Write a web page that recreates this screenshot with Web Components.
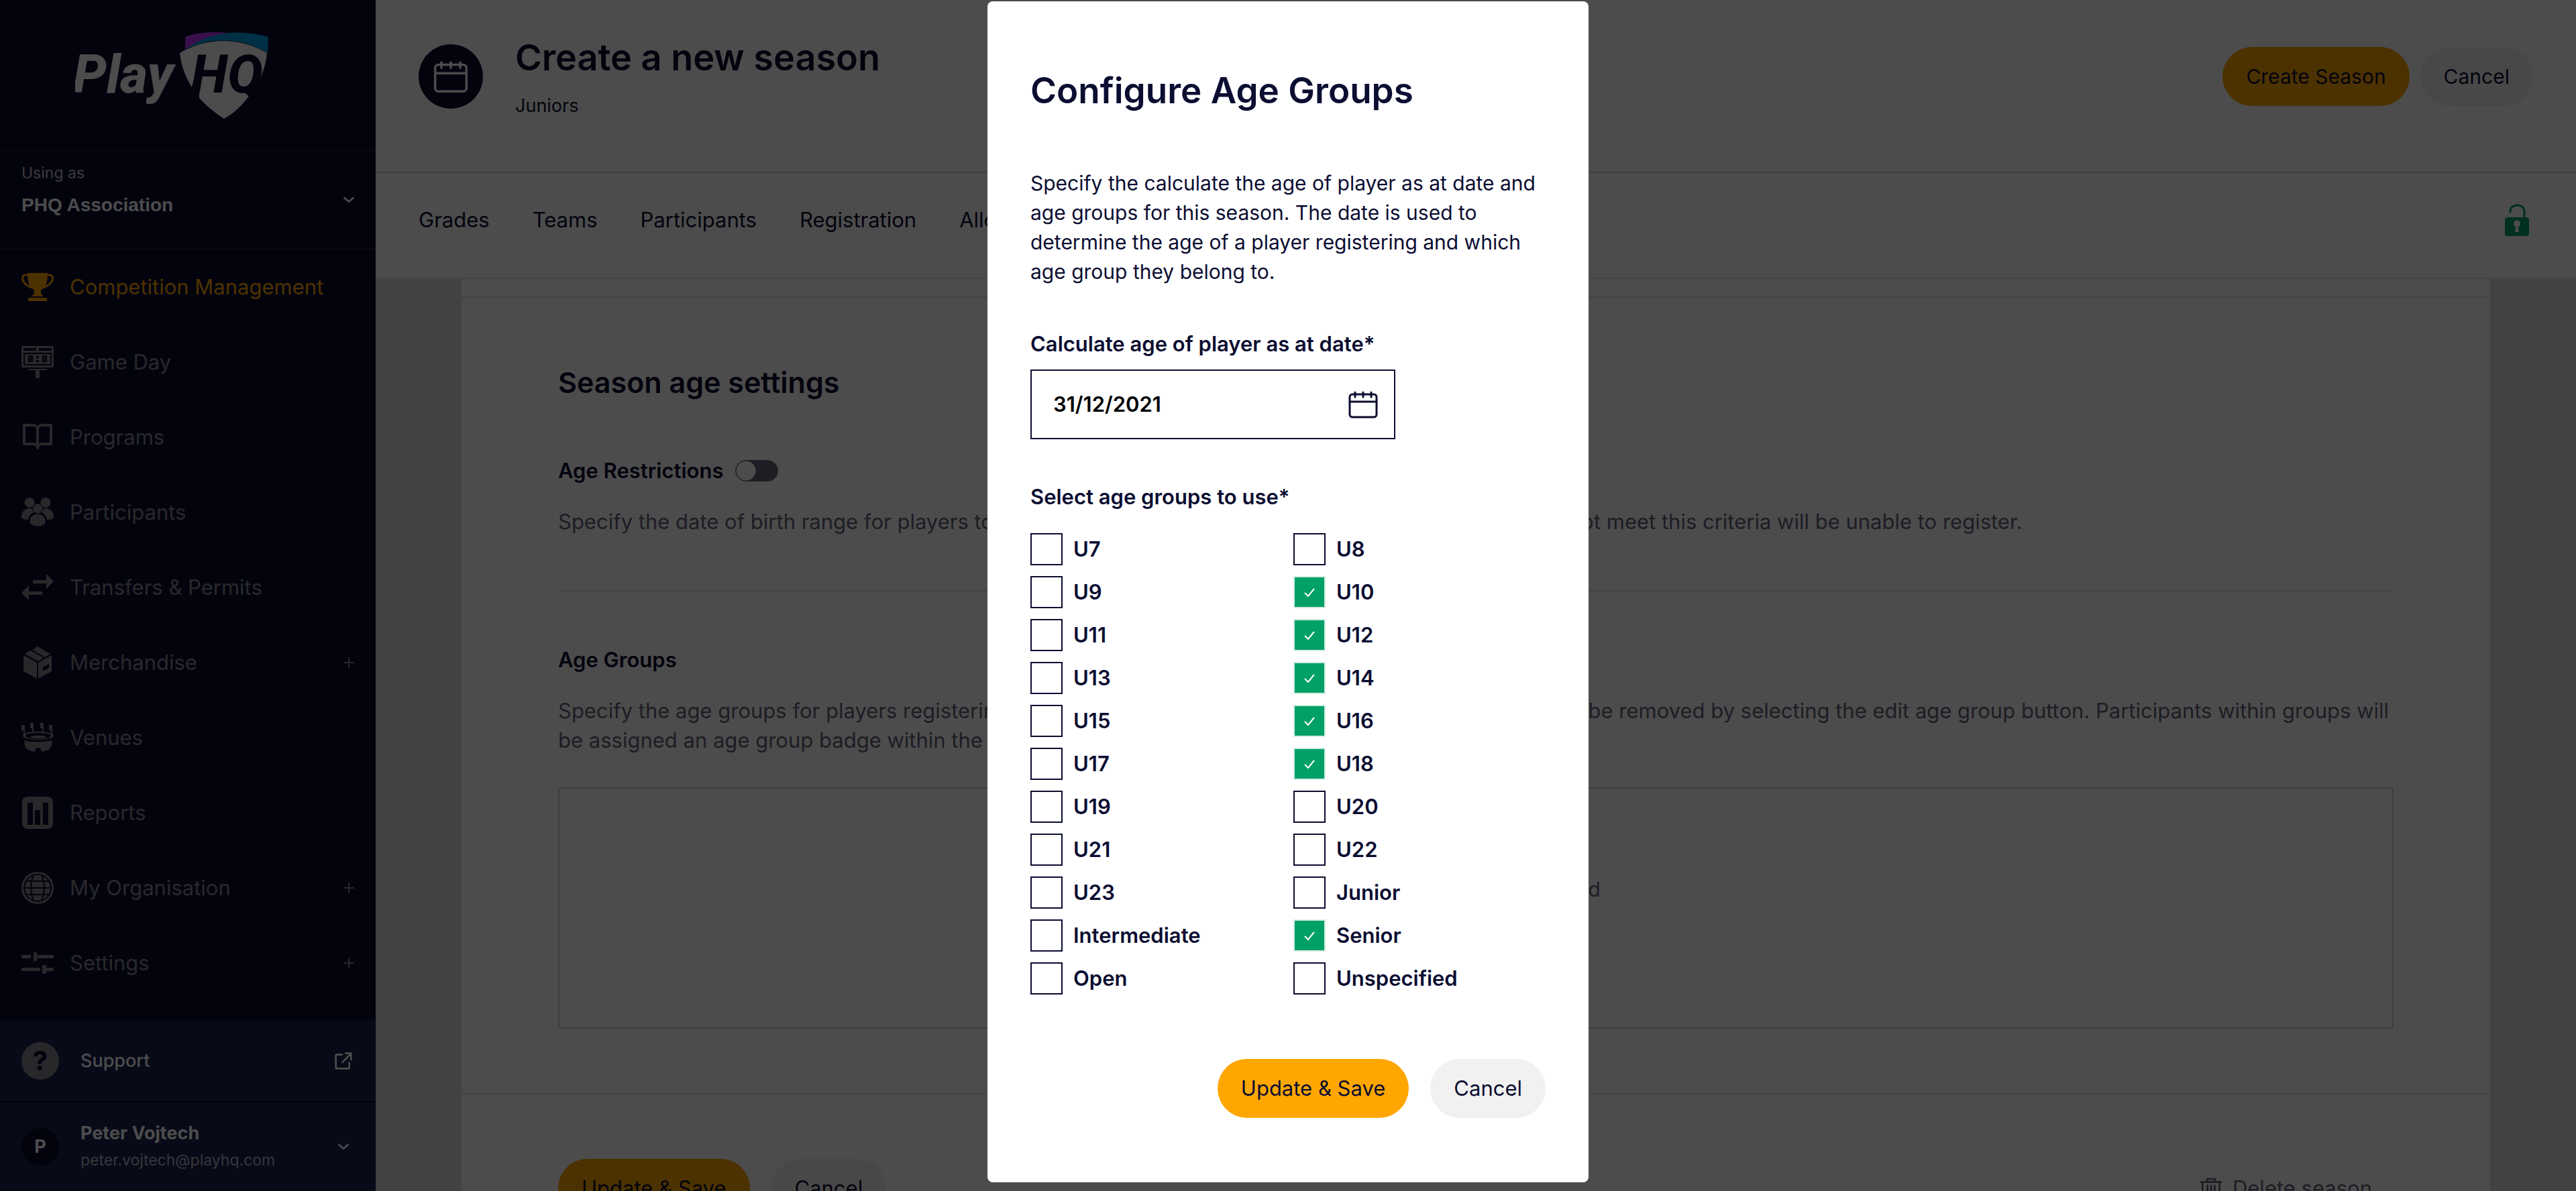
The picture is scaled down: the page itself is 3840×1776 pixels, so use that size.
<!DOCTYPE html>
<html lang="en">
<head>
<meta charset="utf-8">
<title>PlayHQ - Create a new season</title>
<style>
  :root {
    --navy: #0b0d31;
    --navy-light: #1b2350;
    --orange: #ffa700;
    --green: #00a066;
    --grey-text: #64627a;
    --line: #e2e2e2;
  }

  html, body {
    margin: 0;
    height: 100%;
    overflow: hidden;
  }

  body {
    font-family: Inter, "Liberation Sans", sans-serif;
    font-size: 31px;
    line-height: 44px;
    color: var(--navy);
    background: #fff;
  }
</style>
</head>
<body>
<season-app></season-app>

<script>
const icons = {
  trophy: `
    <path d="M9 3h30v3c0 12-4 19-10 23 0 5 1 7 4 9H15c3-2 4-4 4-9C13 25 9 18 9 6z" fill="currentColor"/>
    <path d="M10 6H6C3 6 1.500 8 1.500 11c0 6 7 11 14 14M38 6h4c3 0 4.500 2 4.500 5 0 6-7 11-14 14" fill="none" stroke="currentColor" stroke-width="3"/>
    <path d="M10 40h28v5H10z" fill="currentColor"/>`,
  scoreboard: `
    <rect width="48" height="32" rx="2" fill="currentColor"/>
    <path d="M3 3h19v4H3zM26 3h19v4H26z" fill="var(--navy)"/>
    <rect x="4" y="11" width="40" height="17" fill="none" stroke="var(--navy)" stroke-width="2"/>
    <path d="M11 15h5v8h-5zM32 15h5v8h-5zM11 23l5-8M32 23l5-8" fill="none" stroke="var(--navy)" stroke-width="2"/>
    <path d="M22 15h4v3h-4zM22 21h4v3h-4z" fill="var(--navy)"/>
    <path d="M9 34h30l-2 2H11zM21 36h6v12h-6z" fill="currentColor"/>`,
  book: `
    <path d="M4 6h13c4 0 7 3 7 7 0-4 3-7 7-7h13v28H31c-4 0-6 1-7 5-1-4-3-5-7-5H4zM24 13v27" fill="none" stroke="currentColor" stroke-width="4" stroke-linejoin="round" stroke-linecap="round"/>`,
  people: `
    <g fill="currentColor">
      <circle cx="12" cy="9.500" r="7.500"/><circle cx="36" cy="9.500" r="7.500"/>
      <path d="M0 31c0-8 5-13 12-13 2 0 4 .5 6 1.500V24c-5 3-7 6-8 11-5 0-10-1-10-4zM48 31c0-8-5-13-12-13-2 0-4 .5-6 1.500V24c5 3 7 6 8 11 5 0 10-1 10-4z"/>
      <circle cx="24" cy="18.500" r="7.500" stroke="var(--navy)"/>
      <path d="M12 38c0-8 5-12 12-12s12 4 12 12c0 4-5 7-12 7s-12-3-12-7z" stroke="var(--navy)"/>
    </g>`,
  transfer: `<path d="M17 13h20V4l11 11-11 11v-8H17zM31 35H11v8L0 32l11-11v9h20z" fill="currentColor"/>`,
  box: `
    <g fill="currentColor">
      <path d="M3 13l20 11v24L3 37zM45 13L25 24v24l20-11zM5 11l8-5 20 11-8 5zM16 5l8-5 19 11-8 5z"/>
      <path d="M32 31l9-5v6l-9 5z" fill="var(--navy)"/>
    </g>`,
  stadium: `
    <g fill="currentColor">
      <path d="M0 5h5v8H0zM3 13h2v9H3zM13 2h5v8h-5zM16 10h2v5h-2zM28 2h5v8h-5zM31 10h2v5h-2zM41 5h5v8h-5zM44 13h2v9h-2z"/>
      <path fill-rule="evenodd" d="M25 15c12 0 23 2 23 6s-11 6-23 6-23-2-23-6 11-6 23-6zm0 2c-11 0-19 1-19 4s8 5 19 5 19-2 19-5-8-4-19-4z"/>
      <ellipse cx="25" cy="23" rx="12" ry="2"/>
      <path d="M4 28c10 3 30 3 42 0l-1 7c-1 6-7 9-15 10 0-8-10-8-10 0-8-1-14-4-15-10z"/>
    </g>`,
  chart: `
    <rect x="1" width="46" height="48" rx="8" fill="currentColor"/>
    <path d="M9 9h8v33H9zM20 20h8v22h-8zM32 9h8v33h-8z" fill="var(--navy)"/>`,
  globe: `
    <circle cx="24" cy="24" r="22.500" fill="none" stroke="currentColor" stroke-width="3"/>
    <circle cx="24" cy="24" r="19" fill="currentColor"/>
    <path d="M4 24h40M7 14h34M7 34h34M18 5c-5 12-5 26 0 38M30 5c5 12 5 26 0 38" fill="none" stroke="var(--navy)" stroke-width="2"/>`,
  sliders: `<path d="M0 12h14v5H0zM18 8h5v4h25v5H23v4h-5zM0 31h28v5H0zM31 27h6v4h11v5H37v4h-6z" fill="currentColor"/>`,
  calendar: `
    <g fill="none" stroke="currentColor" stroke-width="3" stroke-linecap="round">
      <rect x="4" y="9" width="40" height="34" rx="4"/>
      <path d="M4 20h40M12 6v7M24 6v7M36 6v7"/>
    </g>`,
  chevron: `<path d="M4 15l20 17 20-17" fill="none" stroke="currentColor" stroke-width="8" stroke-linecap="round" stroke-linejoin="round"/>`,
  plus: `<path d="M24 3v42M3 24h42" stroke="currentColor" stroke-width="6" stroke-linecap="round"/>`,
  external: `
    <g fill="none" stroke="currentColor" stroke-width="4" stroke-linecap="round" stroke-linejoin="round">
      <path d="M21 10H9c-1 0-2 1-2 2v27c0 1 1 2 2 2h26c1 0 2-1 2-2V28"/>
      <path d="M29 7h12v14M40 8L22 27"/>
    </g>`,
  unlock: `
    <path d="M14 12v-1c0-12 21-12 21 0v10" fill="none" stroke="currentColor" stroke-width="3" stroke-linecap="round"/>
    <rect x="6" y="20" width="36" height="28" rx="4" fill="currentColor"/>
    <path d="M21 42l1-8a5 5 0 1 1 4 0l1 8z" fill="#fff"/>`,
  trash: `
    <g fill="none" stroke="currentColor" stroke-width="4">
      <path d="M0 10h48M15 9V3h18v6M5 12v33h38V12M16 16v25M24 16v25M32 16v25"/>
    </g>`
};

class AppIcon extends HTMLElement {
  constructor() {
    super();
    this.shadowDOM = this.attachShadow({ mode: 'open' });
  }

  connectedCallback() {
    this.shadowDOM.innerHTML = `
      <style>
      :host {
        display: block;
        flex: none;
        width: 48px;
        height: 48px;
      }

      svg {
        display: block;
        width: 100%;
        height: 100%;
      }
      </style>
      <svg viewBox="0 0 48 48" aria-hidden="true">${icons[this.getAttribute('name')]}</svg>
    `;
  }
}

class PillButton extends HTMLElement {
  constructor() {
    super();
    this.attachShadow({ mode: 'open' }).innerHTML = `
      <style>
      :host {
        display: block;
        flex: none;
      }

      button {
        display: flex;
        align-items: center;
        gap: 16px;
        height: 88px;
        padding: 0 35px;
        border: 0;
        border-radius: 44px;
        background: #f1f1f1;
        color: var(--navy);
        font: inherit;
        cursor: pointer;
      }

      :host([primary]) button {
        background: var(--orange);
      }

      :host([plain]) button {
        padding: 0 32px;
        background: none;
        color: var(--grey-text);
      }
      </style>
      <button type="button"><slot></slot></button>
    `;
  }
}

class PlayLogo extends HTMLElement {
  constructor() {
    super();
    this.attachShadow({ mode: 'open' }).innerHTML = `
      <style>
      :host {
        display: block;
      }

      svg {
        display: block;
        width: 288px;
        height: 130px;
      }

      text {
        font-style: italic;
        font-weight: 800;
      }
      </style>
      <svg viewBox="112 48 288 130" role="img" aria-label="PlayHQ">
        <path d="M276 55c20-7 42-8 64-6-22 4-40 9-64 25z" fill="#c136ff"/>
        <path d="M278 73c34-26 79-30 122-18l-1 24c-38-24-85-24-121-6z" fill="#00a0e6"/>
        <path d="M268 79c40-24 90-24 130 0-2 18-7 34-16 50l-4-4-6 17c-10 14-22 26-38 35-14-9-26-19-37-31v-30l-11 14c-10-15-16-33-18-51z" fill="#fff"/>
        <path d="M289 118l8 0 0 29-12-14z" fill="var(--navy)"/>
        <path d="M368 132l12-9 4 7-10 12z" fill="var(--navy)"/>
        <text x="109" y="138" font-family="Roboto" font-size="79" fill="#fff">Play</text>
        <text x="285" y="138" font-family="Liberation Sans Narrow, Roboto" font-size="79" fill="var(--navy)">HQ</text>
      </svg>
    `;
  }
}

class NavItem extends HTMLElement {
  constructor() {
    super();
    this.shadowDOM = this.attachShadow({ mode: 'open' });
  }

  connectedCallback() {
    const more = this.hasAttribute('expandable') ? '<app-icon class="more" name="plus"></app-icon>' : '';
    this.shadowDOM.innerHTML = `
      <style>
      :host {
        display: block;
      }

      a {
        display: flex;
        align-items: center;
        gap: 24px;
        height: 112px;
        padding: 0 32px;
        color: #88868f;
        text-decoration: none;
      }

      :host([active]) a {
        color: var(--orange);
      }

      .label {
        flex: 1;
      }

      .more {
        width: 16px;
        height: 16px;
      }
      </style>
      <a href="#">
        <app-icon name="${this.getAttribute('icon')}"></app-icon>
        <span class="label"><slot></slot></span>
        ${more}
      </a>
    `;
  }
}

class AppSidebar extends HTMLElement {
  constructor() {
    super();
    this.attachShadow({ mode: 'open' }).innerHTML = `
      <style>
      :host {
        display: flex;
        flex-direction: column;
        flex: none;
        width: 560px;
        background: var(--navy);
        color: #fff;
      }

      .logo {
        box-sizing: border-box;
        height: 226px;
        padding: 48px 112px 0;
        border-bottom: 2px solid #1a1c3d;
      }

      .account {
        display: flex;
        align-items: center;
        justify-content: space-between;
        width: 100%;
        padding: 16px 32px 48px;
        border: 0;
        border-bottom: 2px solid #1a1c3d;
        background: none;
        color: #fff;
        font: inherit;
        text-align: left;
      }

      .account .using {
        display: block;
        margin-bottom: 16px;
        color: #c0c0c0;
        font-size: 23px;
        line-height: 32px;
      }

      .account .name {
        display: block;
        font: bold 28px/32px "Liberation Sans", Arial, sans-serif;
      }

      .account .small {
        margin-top: 32px;
      }

      .small {
        width: 16px;
        height: 16px;
      }

      .footer {
        margin-top: auto;
        background: var(--navy-light);
        font-size: 27px;
        line-height: 40px;
      }

      .row {
        box-sizing: border-box;
        display: flex;
        align-items: center;
        gap: 32px;
        width: 100%;
        height: 132px;
        padding: 0 32px;
        border: 0;
        background: none;
        color: #fff;
        font: inherit;
        text-align: left;
        text-decoration: none;
      }

      .support {
        height: 122px;
        border-bottom: 2px solid var(--navy);
        font-weight: 500;
      }

      .row .text {
        flex: 1;
      }

      .avatar {
        flex: none;
        width: 56px;
        border-radius: 50%;
        background: var(--navy);
        font-size: 27px;
        font-weight: 700;
        line-height: 56px;
        text-align: center;
      }

      .support .avatar {
        background: #88868f;
        color: var(--navy);
        font-size: 40px;
      }

      .user {
        display: block;
        font-weight: 700;
      }

      .email {
        display: block;
        color: #b8b8c4;
        font-size: 23px;
      }

      .end {
        display: flex;
        justify-content: center;
        width: 32px;
      }

      .external {
        width: 32px;
        height: 32px;
      }
      </style>
      <div class="logo"><play-logo></play-logo></div>
      <button class="account" type="button">
        <span>
          <span class="using">Using as</span>
          <span class="name">PHQ Association</span>
        </span>
        <app-icon class="small" name="chevron"></app-icon>
      </button>
      <nav>
        <nav-item icon="trophy" active>Competition Management</nav-item>
        <nav-item icon="scoreboard">Game Day</nav-item>
        <nav-item icon="book">Programs</nav-item>
        <nav-item icon="people">Participants</nav-item>
        <nav-item icon="transfer">Transfers &amp; Permits</nav-item>
        <nav-item icon="box" expandable>Merchandise</nav-item>
        <nav-item icon="stadium">Venues</nav-item>
        <nav-item icon="chart">Reports</nav-item>
        <nav-item icon="globe" expandable>My Organisation</nav-item>
        <nav-item icon="sliders" expandable>Settings</nav-item>
      </nav>
      <div class="footer">
        <a class="row support" href="#">
          <span class="avatar">?</span>
          <span class="text">Support</span>
          <app-icon class="external" name="external"></app-icon>
        </a>
        <button class="row" type="button">
          <span class="avatar">P</span>
          <span class="text">
            <span class="user">Peter Vojtech</span>
            <span class="email">peter.vojtech@playhq.com</span>
          </span>
          <span class="end"><app-icon class="small" name="chevron"></app-icon></span>
        </button>
      </div>
    `;
  }
}

class PageHeader extends HTMLElement {
  constructor() {
    super();
    this.attachShadow({ mode: 'open' }).innerHTML = `
      <style>
      :host {
        display: block;
      }

      header {
        display: flex;
        align-items: center;
        padding: 50px 64px 78px;
        border-bottom: 2px solid #d6d6d6;
      }

      .badge {
        display: flex;
        align-items: center;
        justify-content: center;
        width: 96px;
        height: 96px;
        border-radius: 50%;
        background: var(--navy);
        color: #fff;
      }

      .badge app-icon {
        width: 56px;
        height: 56px;
      }

      .titles {
        flex: 1;
        margin-left: 48px;
      }

      h1 {
        margin: 0 0 16px;
        font-size: 54px;
        font-weight: 600;
        line-height: 72px;
      }

      p {
        margin: 0;
        font-size: 27px;
        line-height: 40px;
      }

      .actions {
        display: flex;
        gap: 16px;
        font-size: 30px;
      }

      .tabs {
        display: flex;
        align-items: center;
        gap: 64px;
        padding: 48px 64px 64px;
        border-bottom: 2px solid var(--line);
      }

      .tabs a {
        color: inherit;
        text-decoration: none;
      }

      .tabs app-icon {
        margin: -2px 0 -2px auto;
        color: var(--green);
      }
      </style>
      <header>
        <div class="badge"><app-icon name="calendar"></app-icon></div>
        <div class="titles">
          <h1>Create a new season</h1>
          <p>Juniors</p>
        </div>
        <div class="actions">
          <pill-button primary>Create Season</pill-button>
          <pill-button>Cancel</pill-button>
        </div>
      </header>
      <nav class="tabs">
        <a href="#">Grades</a>
        <a href="#">Teams</a>
        <a href="#">Participants</a>
        <a href="#">Registration</a>
        <a href="#">Allocation</a>
        <app-icon name="unlock"></app-icon>
      </nav>
    `;
  }
}

class SeasonSettings extends HTMLElement {
  constructor() {
    super();
    this.attachShadow({ mode: 'open' }).innerHTML = `
      <style>
      :host {
        display: block;
        padding: 0 128px;
        background: #dedede;
      }

      .card {
        padding-top: 26px;
        background: #fff;
      }

      section {
        padding: 96px 144px;
        border-top: 2px solid var(--line);
      }

      h2, h3, p {
        margin: 0;
      }

      h2 {
        margin-bottom: 80px;
        font-size: 43px;
        font-weight: 600;
        line-height: 60px;
      }

      h3, label {
        font-size: 31px;
        font-weight: 600;
        line-height: 44px;
      }

      p {
        margin-top: 32px;
        color: var(--grey-text);
      }

      hr {
        height: 2px;
        margin: 80px 0;
        border: 0;
        background: var(--line);
      }

      .switch {
        display: flex;
        align-items: center;
        gap: 18px;
      }

      .switch input {
        appearance: none;
        width: 64px;
        height: 32px;
        margin: 0;
        border: 1px solid var(--grey-text);
        border-radius: 16px;
        background: radial-gradient(circle at 15px 15px, #fff 14px, var(--grey-text) 15px);
      }

      .empty {
        box-sizing: border-box;
        display: flex;
        flex-direction: column;
        align-items: center;
        gap: 48px;
        height: 360px;
        margin-top: 48px;
        padding-top: 128px;
        border: 2px solid #cfcfcf;
      }

      .empty span {
        color: var(--grey-text);
        font-size: 30px;
      }

      .actions {
        display: flex;
        gap: 32px;
      }

      .actions [plain] {
        margin-left: auto;
      }

      .trash {
        width: 32px;
        height: 32px;
      }
      </style>
      <div class="card">
        <section>
          <h2>Season age settings</h2>
          <div class="switch">
            <label for="restrictions">Age Restrictions</label>
            <input id="restrictions" type="checkbox" role="switch">
          </div>
          <p>Specify the date of birth range for players to be eligible to register for this season. Participants who do not meet this criteria will be unable to register.</p>
          <hr>
          <h3>Age Groups</h3>
          <p>Specify the age groups for players registering for this season. Age groups are able to be added and may be removed by selecting the edit age group button. Participants within groups will be assigned an age group badge within the admin portal.</p>
          <div class="empty">
            <span>No age groups configured</span>
            <pill-button primary>Add Age Groups</pill-button>
          </div>
        </section>
        <section>
          <div class="actions">
            <pill-button primary>Update &amp; Save</pill-button>
            <pill-button>Cancel</pill-button>
            <pill-button plain><app-icon class="trash" name="trash"></app-icon>Delete season</pill-button>
          </div>
        </section>
      </div>
    `;
  }
}

class AgeCheckbox extends HTMLElement {
  constructor() {
    super();
    this.shadowDOM = this.attachShadow({ mode: 'open' });
  }

  set data({ name, checked }) {
    this._data = { name, checked };
    this.render();
  }

  render() {
    this.shadowDOM.innerHTML = `
      <style>
      :host {
        display: block;
      }

      label {
        display: flex;
        align-items: center;
        gap: 16px;
        height: 48px;
        font-weight: 600;
      }

      .box {
        display: grid;
        width: 48px;
        height: 48px;
      }

      input, svg {
        grid-area: 1 / 1;
        box-sizing: border-box;
        width: 48px;
        height: 48px;
        margin: 0;
      }

      input {
        appearance: none;
        border: 2px solid var(--navy);
        background: #fff;
      }

      input:checked {
        border-color: #d3ede3;
        background: var(--green) padding-box;
      }

      svg {
        display: none;
        pointer-events: none;
      }

      input:checked + svg {
        display: block;
      }
      </style>
      <label>
        <span class="box">
          <input type="checkbox" ${this._data.checked ? 'checked' : ''}>
          <svg viewBox="0 0 48 48"><path d="M17 25l5 5 9-11" fill="none" stroke="#fff" stroke-width="2"/></svg>
        </span>
        <span>${this._data.name}</span>
      </label>
    `;
  }
}

const ageGroups = [
  'U7', 'U8', 'U9', 'U10', 'U11', 'U12', 'U13', 'U14', 'U15', 'U16', 'U17',
  'U18', 'U19', 'U20', 'U21', 'U22', 'U23', 'Junior', 'Intermediate', 'Senior',
  'Open', 'Unspecified'
];
const selected = ['U10', 'U12', 'U14', 'U16', 'U18', 'Senior'];

class AgeGroupsModal extends HTMLElement {
  constructor() {
    super();
    this.shadowDOM = this.attachShadow({ mode: 'open' });
  }

  connectedCallback() {
    this.shadowDOM.innerHTML = `
      <style>
      :host {
        position: fixed;
        inset: 0;
        display: flex;
        align-items: flex-start;
        justify-content: center;
        padding-top: 2px;
        background: rgba(0, 0, 0, 0.7);
      }

      .dialog {
        box-sizing: border-box;
        width: 896px;
        padding: 97px 64px 96px;
        border-radius: 8px;
        background: #fff;
      }

      h2 {
        margin: 0 0 80px;
        font-size: 53px;
        font-weight: 600;
        line-height: 72px;
      }

      p {
        margin: 0 0 64px;
        font-size: 30px;
      }

      .label {
        display: block;
        padding: 0;
        font-weight: 600;
      }

      .date {
        box-sizing: border-box;
        display: flex;
        align-items: center;
        width: 544px;
        height: 104px;
        margin: 16px 0 64px;
        padding: 0 22px 0 32px;
        border: 2px solid var(--navy);
      }

      .date input {
        flex: 1;
        min-width: 0;
        padding: 0;
        border: 0;
        outline: 0;
        color: #000;
        font: inherit;
        font-weight: 600;
      }

      fieldset {
        margin: 0;
        padding: 0;
        border: 0;
      }

      .groups {
        display: grid;
        grid-template-columns: 1fr 1fr;
        gap: 16px;
        margin-top: 32px;
      }

      .actions {
        display: flex;
        justify-content: flex-end;
        gap: 32px;
        margin-top: 96px;
      }
      </style>
      <div class="dialog" role="dialog" aria-labelledby="title">
        <h2 id="title">Configure Age Groups</h2>
        <p>Specify the calculate the age of player as at date and age groups for this season. The date is used to determine the age of a player registering and which age group they belong to.</p>
        <label class="label" for="date">Calculate age of player as at date*</label>
        <div class="date">
          <input id="date" type="text" value="31/12/2021">
          <app-icon name="calendar"></app-icon>
        </div>
        <fieldset>
          <legend class="label">Select age groups to use*</legend>
          <div class="groups"></div>
        </fieldset>
        <div class="actions">
          <pill-button primary>Update &amp; Save</pill-button>
          <pill-button>Cancel</pill-button>
        </div>
      </div>
    `;

    const groups = this.shadowDOM.querySelector('.groups');
    ageGroups.forEach((name) => {
      const item = document.createElement('age-checkbox');
      item.data = { name, checked: selected.includes(name) };
      groups.appendChild(item);
    });
  }
}

class SeasonApp extends HTMLElement {
  constructor() {
    super();
    this.attachShadow({ mode: 'open' }).innerHTML = `
      <style>
      :host {
        display: flex;
        height: 100vh;
        overflow: hidden;
      }

      main {
        flex: 1;
        min-width: 0;
        overflow: hidden;
      }
      </style>
      <app-sidebar></app-sidebar>
      <main>
        <page-header></page-header>
        <season-settings></season-settings>
      </main>
      <age-groups-modal></age-groups-modal>
    `;
  }
}

customElements.define('app-icon', AppIcon);
customElements.define('pill-button', PillButton);
customElements.define('play-logo', PlayLogo);
customElements.define('nav-item', NavItem);
customElements.define('app-sidebar', AppSidebar);
customElements.define('page-header', PageHeader);
customElements.define('season-settings', SeasonSettings);
customElements.define('age-checkbox', AgeCheckbox);
customElements.define('age-groups-modal', AgeGroupsModal);
customElements.define('season-app', SeasonApp);
</script>
</body>
</html>
